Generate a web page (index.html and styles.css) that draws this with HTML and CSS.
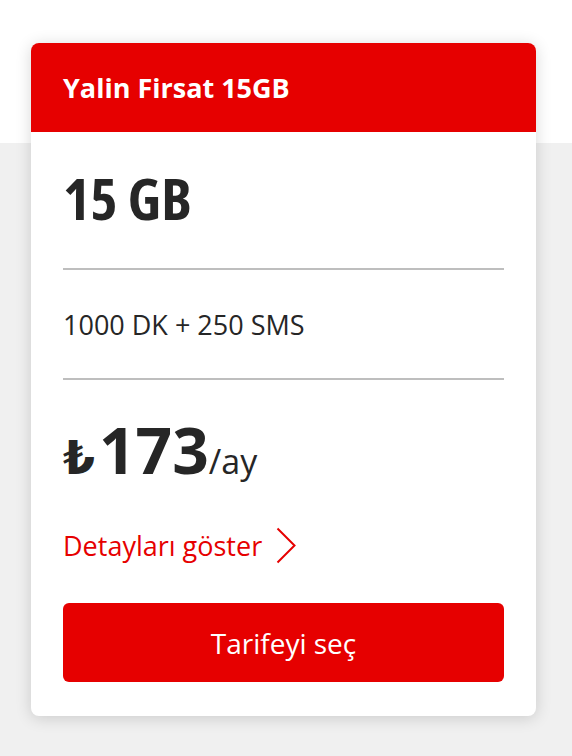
FILE: index.html
```html
<!DOCTYPE html>
<html lang="tr">
<head>
<meta charset="utf-8">
<link rel="stylesheet" href="styles.css">
</head>
<body>
<main class="page">
  <section class="plan-card">
    <header class="plan-header">
      <h2 class="plan-title">Yalin Firsat 15GB</h2>
    </header>
    <div class="plan-body">
      <div class="plan-data">15 GB</div>
      <hr class="plan-divider">
      <div class="plan-minutes">1000 DK + 250 SMS</div>
      <hr class="plan-divider">
      <div class="plan-price">
        <span class="currency">₺</span><span class="amount">173</span><span class="period">/ay</span>
      </div>
      <a class="plan-details" href="#">
        <span>Detayları göster</span>
        <svg class="chevron" width="20" height="37" viewBox="0 0 20 37" aria-hidden="true">
          <path d="M1.5 1.5 L18.5 18.5 L1.5 35.5" fill="none" stroke="#e60000" stroke-width="2"/>
        </svg>
      </a>
      <button class="plan-select" type="button">Tarifeyi seç</button>
    </div>
  </section>
</main>
</body>
</html>
```

FILE: styles.css
```css
* { box-sizing: border-box; }
html, body { margin: 0; padding: 0; }
body {
  font-family: "Open Sans", "DejaVu Sans", sans-serif;
  color: #262626;
  background: #f0f0f0;
}
.page {
  min-height: 756px;
  padding: 43px 36px 40px 31px;
  background: linear-gradient(#ffffff 0, #ffffff 143px, #f0f0f0 143px);
}
.plan-card {
  width: 505px;
  background: #ffffff;
  border-radius: 8px;
  box-shadow: 0 2px 16px rgba(0, 0, 0, 0.16);
  overflow: hidden;
}
.plan-header {
  height: 89px;
  background: #e60000;
  display: flex;
  align-items: center;
  padding: 0 32px;
}
.plan-title {
  margin: 0;
  color: #ffffff;
  font-size: 27px;
  font-weight: 700;
  font-stretch: 95%;
  line-height: 1;
}
.plan-body {
  padding: 0 32px 34px;
  display: flex;
  flex-direction: column;
}
.plan-data {
  height: 136px;
  display: flex;
  align-items: center;
  font-size: 58px;
  font-weight: 700;
  font-stretch: 75%;
  line-height: 1;
  padding-bottom: 4px;
}
.plan-divider {
  margin: 0;
  border: 0;
  height: 2px;
  background: #bebebe;
}
.plan-minutes {
  height: 108px;
  display: flex;
  align-items: center;
  font-size: 27px;
  line-height: 1;
}
.plan-price {
  margin-top: 38px;
  display: flex;
  align-items: baseline;
  line-height: 1;
}
.currency { font-size: 46px; font-weight: 700; margin-right: 4px; }
.amount { font-size: 64px; font-weight: 700; font-stretch: 92%; }
.period { font-size: 34px; }
.plan-details {
  margin-top: 45px;
  display: flex;
  align-items: center;
  gap: 14px;
  color: #e60000;
  text-decoration: none;
  font-size: 27px;
  line-height: 1;
}
.plan-select {
  margin-top: 39px;
  height: 79px;
  border: 0;
  border-radius: 6px;
  background: #e60000;
  color: #ffffff;
  font-family: inherit;
  font-size: 28px;
  cursor: pointer;
}
```
